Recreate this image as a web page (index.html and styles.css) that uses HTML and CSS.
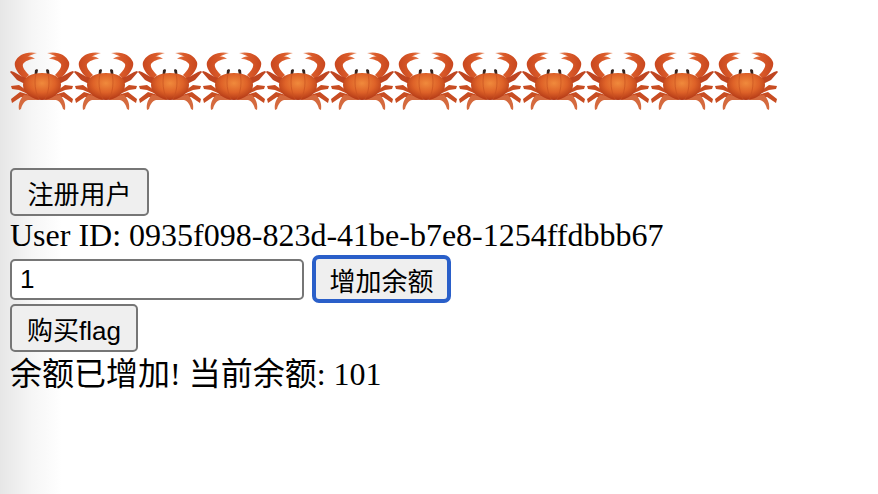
FILE: index.html
```html
<!DOCTYPE html>
<html lang="en">

<head>
    <meta charset="UTF-8">
    <meta name="viewport" content="width=device-width, initial-scale=1.0">
    <title>Crab Shop</title>
    <link rel="stylesheet" href="styles.css">
</head>

<body>
    <svg class="defs" width="0" height="0">
        <defs>
            <radialGradient id="shell" cx="0.5" cy="0.38" r="0.62">
                <stop offset="0" stop-color="#f08a3c" />
                <stop offset="0.55" stop-color="#de6228" />
                <stop offset="1" stop-color="#b23816" />
            </radialGradient>
            <linearGradient id="claw" x1="0" y1="0" x2="1" y2="0">
                <stop offset="0" stop-color="#c9481f" />
                <stop offset="0.65" stop-color="#dc5d2b" />
                <stop offset="1" stop-color="#e79a78" />
            </linearGradient>
            <g id="side">
                <!-- claw arm -->
                <path d="M10 27 C6 22 4 18 5 14 C8 7 16 3 27 5 C24 6 20 7 17 9 C20 8 23 9 25 11 C20 11 15 13 13 16 C12 19 15 23 19 27 L15 31 Z" fill="url(#claw)" />
                <!-- legs -->
                <path d="M17 37 L7 32 L0 24 L1 23 L4 24 L11 28 L19 31 Z" fill="#bf4520" />
                <path d="M16 42 L9 37 L1 38 L2 41 L9 42 L18 46 Z" fill="#c84d22" />
                <path d="M20 47 L10 44 L1 51 L2 55 L11 49 L22 51 Z" fill="#c84d22" />
                <path d="M27 48 L14 47 C10 51 8 56 9 62 L11 61 C12 57 14 53 18 52 L29 52 Z" fill="#d56a3e" />
                <!-- eye -->
                <path d="M24.5 27 L25 22 L27 21 L28 22 L27 27 Z" fill="#33241f" />
            </g>
            <symbol id="crab" viewBox="0 0 64 64">
                <use href="#side" />
                <use href="#side" transform="matrix(-1 0 0 1 64 0)" />
                <path d="M13 37 C13 29 21 25 32 25 C43 25 51 29 51 37 C51 45 42 52 32 52 C22 52 13 45 13 37 Z" fill="url(#shell)" />
                <path d="M26 26 C24 33 25 44 29 51 M38 26 C40 33 39 44 35 51" stroke="#c9521f" stroke-width="0.7" fill="none" />
            </symbol>
        </defs>
    </svg>

    <div class="crabs">
        <svg class="crab"><use href="#crab" /></svg>
        <svg class="crab"><use href="#crab" /></svg>
        <svg class="crab"><use href="#crab" /></svg>
        <svg class="crab"><use href="#crab" /></svg>
        <svg class="crab"><use href="#crab" /></svg>
        <svg class="crab"><use href="#crab" /></svg>
        <svg class="crab"><use href="#crab" /></svg>
        <svg class="crab"><use href="#crab" /></svg>
        <svg class="crab"><use href="#crab" /></svg>
        <svg class="crab"><use href="#crab" /></svg>
        <svg class="crab"><use href="#crab" /></svg>
        <svg class="crab"><use href="#crab" /></svg>
    </div>

    <div class="row"><button class="btn btn-wide">注册用户</button></div>
    <div class="line">User ID: 0935f098-823d-41be-b7e8-1254ffdbbb67</div>
    <div class="row amount">
        <input class="amount-input" type="text" value="1">
        <button class="btn btn-focus">增加余额</button>
    </div>
    <div class="row buy"><button class="btn">购买flag</button></div>
    <div class="line message">余额已增加! 当前余额: 101</div>
</body>

</html>
```

FILE: styles.css
```css
html, body {
    height: 100%;
}

body {
    margin: 0;
    padding: 48px 10px 0;
    box-sizing: border-box;
    overflow: hidden;
    background: linear-gradient(to right, #e6e6e6, #f6f6f6 32px, #fff 62px);
    color: #000;
    font-family: "Liberation Serif", "Noto Sans CJK SC", serif;
    font-size: 32px;
}

.defs {
    position: absolute;
}

.crabs {
    display: flex;
    margin-bottom: 56px;
}

.crab {
    width: 64px;
    height: 64px;
    flex: none;
}

.row {
    display: flex;
    align-items: center;
}

.line {
    height: 39px;
    line-height: 39px;
    white-space: nowrap;
}

.btn {
    height: 48px;
    padding: 0 15px;
    box-sizing: border-box;
    background-color: #efefef;
    border: 2px solid #767676;
    border-radius: 5px;
    color: #000;
    font-family: "Liberation Sans", "Noto Sans CJK SC", sans-serif;
    font-size: 26px;
}

.btn-wide {
    width: 139px;
}

.btn-focus {
    width: 139px;
    border: 4px solid #2a5fc9;
    border-radius: 7px;
    margin-left: 8px;
    padding: 0;
}

.amount {
    height: 48px;
}

.amount-input {
    width: 294px;
    height: 41px;
    padding: 0 8px;
    box-sizing: border-box;
    background-color: #fff;
    border: 2px solid #767676;
    border-radius: 5px;
    font-family: "Liberation Sans", sans-serif;
    font-size: 26px;
}

.buy {
    margin-top: 1px;
}

.message {
    margin-top: 3px;
}
```
